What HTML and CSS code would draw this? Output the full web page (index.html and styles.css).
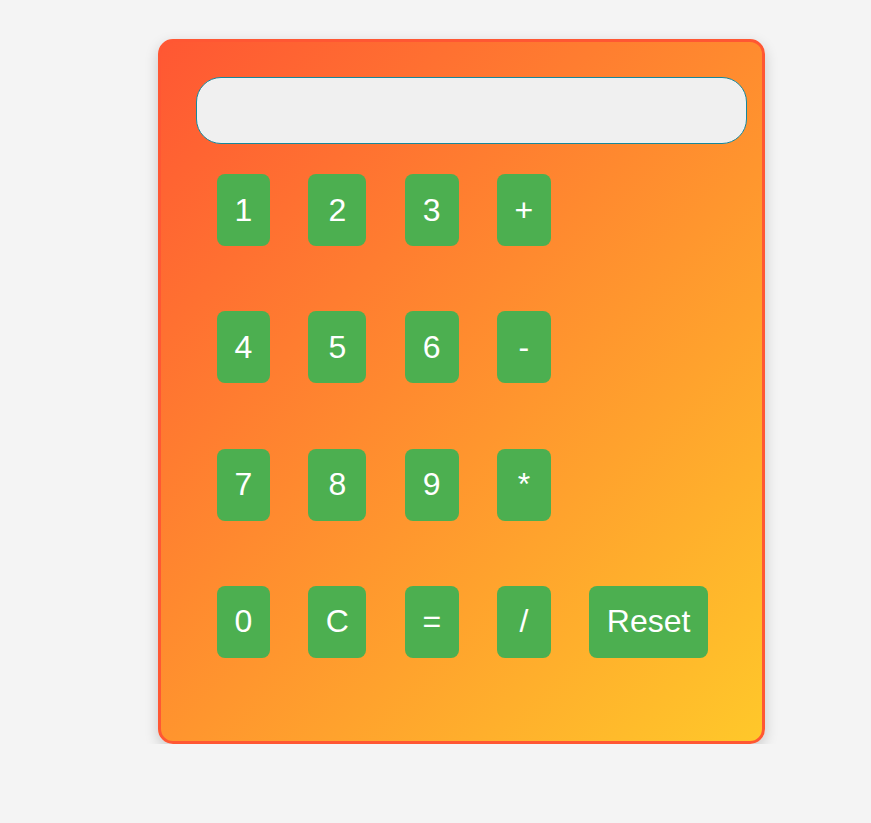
FILE: index.html
```html
<!DOCTYPE html>
<html lang="en">
<head>
<meta charset="UTF-8">
<title>Calculator</title>
<link rel="stylesheet" href="styles.css">
</head>
<body>
<div class="calculator">
  <input class="display" type="text" value="">
  <div class="keys">
    <button class="key">1</button>
    <button class="key">2</button>
    <button class="key">3</button>
    <button class="key">+</button>
    <span class="empty"></span>
    <button class="key">4</button>
    <button class="key">5</button>
    <button class="key">6</button>
    <button class="key">-</button>
    <span class="empty"></span>
    <button class="key">7</button>
    <button class="key">8</button>
    <button class="key">9</button>
    <button class="key">*</button>
    <span class="empty"></span>
    <button class="key">0</button>
    <button class="key">C</button>
    <button class="key">=</button>
    <button class="key">/</button>
    <button class="key">Reset</button>
  </div>
</div>
</body>
</html>
```
FILE: styles.css
```css
html, body {
  margin: 0;
  padding: 0;
}
body {
  background: #f4f4f4;
  font-family: "Liberation Sans", Arial, sans-serif;
  padding: 39px 0 0 158px;
}
.calculator {
  box-sizing: border-box;
  width: 607px;
  border: 3px solid #ff5733;
  border-radius: 15px;
  background: linear-gradient(135deg, #ff5733 0%, #ffc82a 100%);
  box-shadow: 0 5px 14px rgba(0, 0, 0, 0.18);
  padding: 35px 0 83px 35px;
}
.display {
  display: block;
  box-sizing: border-box;
  width: 551px;
  height: 67px;
  margin: 0;
  border: 1px solid #16879b;
  border-radius: 25px;
  background: #f0f0f0;
  font-family: "Liberation Sans", Arial, sans-serif;
  font-size: 30px;
  padding: 0 20px;
  outline: none;
}
.keys {
  display: grid;
  grid-template-columns: repeat(5, max-content);
  column-gap: 38.5px;
  row-gap: 65.3px;
  margin: 30px 0 0 21px;
}
.key {
  font-family: "Liberation Sans", Arial, sans-serif;
  font-size: 32px;
  line-height: 37px;
  padding: 17.5px 17.5px;
  background: #4caf50;
  color: #fff;
  border: none;
  border-radius: 8px;
  cursor: pointer;
}
```
